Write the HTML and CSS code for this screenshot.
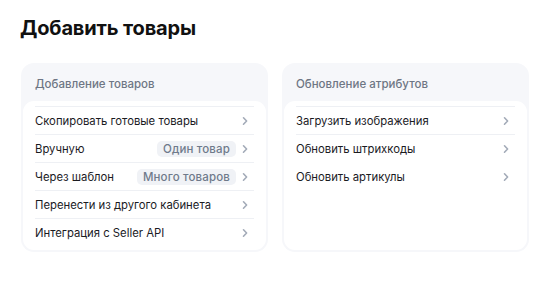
FILE: index.html
```html
<!DOCTYPE html>
<html lang="ru">
<head>
    <meta charset="UTF-8">
    <title>Добавить товары</title>
    <link rel="stylesheet" href="styles.css">
</head>
<body>
    <div class="page">
        <h1 class="title">Добавить товары</h1>

        <div class="cards">
            <!-- Добавление -->
            <div class="card">
                <div class="card-head">Добавление товаров</div>
                <div class="card-body">
                    <div class="row">
                        <span class="row-text">Скопировать готовые товары</span>
                        <svg class="chev" viewBox="0 0 6 10"><path d="M1.5 1.8L4.6 5 1.5 8.2"/></svg>
                    </div>
                    <div class="row">
                        <span class="row-text">Вручную</span>
                        <span class="tag">Один товар</span>
                        <svg class="chev" viewBox="0 0 6 10"><path d="M1.5 1.8L4.6 5 1.5 8.2"/></svg>
                    </div>
                    <div class="row">
                        <span class="row-text">Через шаблон</span>
                        <span class="tag">Много товаров</span>
                        <svg class="chev" viewBox="0 0 6 10"><path d="M1.5 1.8L4.6 5 1.5 8.2"/></svg>
                    </div>
                    <div class="row">
                        <span class="row-text">Перенести из другого кабинета</span>
                        <svg class="chev" viewBox="0 0 6 10"><path d="M1.5 1.8L4.6 5 1.5 8.2"/></svg>
                    </div>
                    <div class="row">
                        <span class="row-text">Интеграция с Seller API</span>
                        <svg class="chev" viewBox="0 0 6 10"><path d="M1.5 1.8L4.6 5 1.5 8.2"/></svg>
                    </div>
                </div>
            </div>

            <!-- Обновление -->
            <div class="card">
                <div class="card-head">Обновление атрибутов</div>
                <div class="card-body">
                    <div class="row">
                        <span class="row-text">Загрузить изображения</span>
                        <svg class="chev" viewBox="0 0 6 10"><path d="M1.5 1.8L4.6 5 1.5 8.2"/></svg>
                    </div>
                    <div class="row">
                        <span class="row-text">Обновить штрихкоды</span>
                        <svg class="chev" viewBox="0 0 6 10"><path d="M1.5 1.8L4.6 5 1.5 8.2"/></svg>
                    </div>
                    <div class="row row-plain">
                        <span class="row-text">Обновить артикулы</span>
                        <svg class="chev" viewBox="0 0 6 10"><path d="M1.5 1.8L4.6 5 1.5 8.2"/></svg>
                    </div>
                </div>
            </div>
        </div>
    </div>
</body>
</html>
```

FILE: styles.css
```css
body { margin: 0; background: #fff; font-family: Inter, "Noto Sans", sans-serif; color: #1b1b1f; }
.page { padding: 16px 19px 0 21px; }
.title { margin: 0 0 23px -1px; font-size: 20px; line-height: 24px; font-weight: 700; letter-spacing: -0.15px; color: #111; }
.cards { display: grid; grid-template-columns: 1fr 1fr; gap: 14px; }
.card { background: #f6f7fa; border-radius: 13px; padding: 0 2px 2px; display: flex; flex-direction: column; height: 189px; box-sizing: border-box; }
.card-head { height: 38px; display: flex; align-items: center; padding: 3px 12px 0; box-sizing: border-box; font-size: 11.5px; font-weight: 500; color: #6e7684; }
.card-body { flex: 1; background: #fff; border-radius: 11px; padding: 5px 12px 0; }
.row { height: 27px; border-top: 1px solid #eef0f4; display: flex; align-items: center; padding-right: 6px; font-size: 11.3px; }
.row-plain { border-top-color: transparent; }
.row-text { flex: 1; }
.tag { background: #f0f2f6; color: #6f7a8b; font-weight: 500; font-size: 11.5px; line-height: 16px; padding: 0 6px; border-radius: 5px; margin-right: 6px; letter-spacing: 0.15px; }
.chev { width: 6px; height: 10px; fill: none; stroke: #a3abb8; stroke-width: 1.6; stroke-linecap: round; stroke-linejoin: round; }
```
